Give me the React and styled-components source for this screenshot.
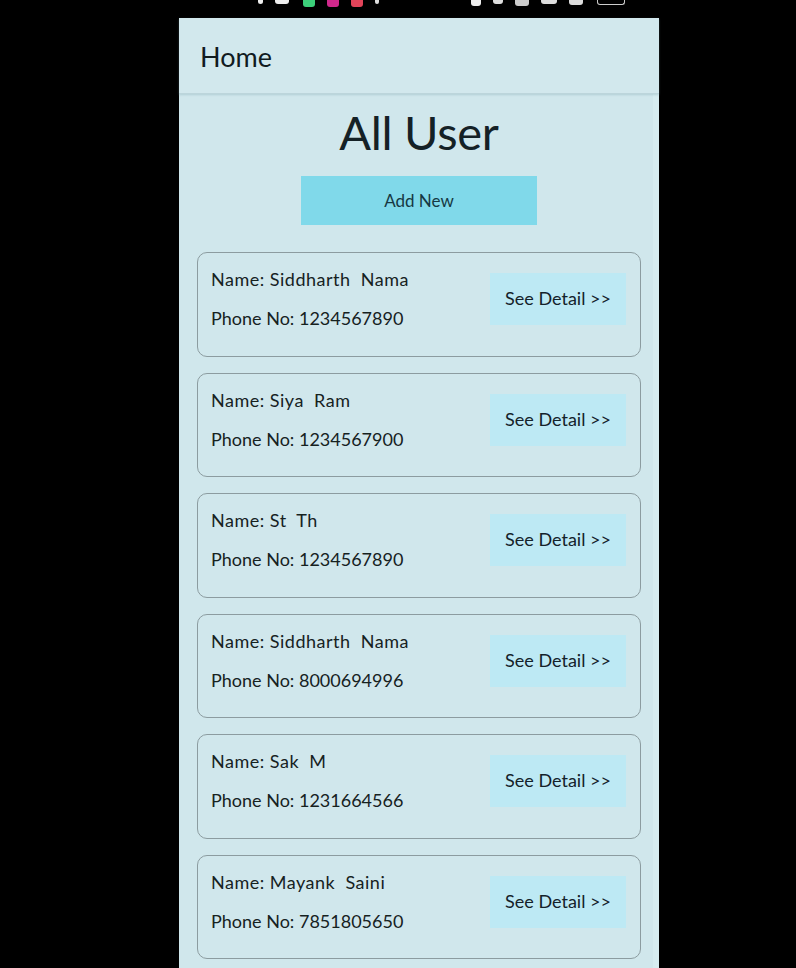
import React from "react";
import styled, { createGlobalStyle } from "styled-components";

const Global = createGlobalStyle`
  html, body { margin: 0; padding: 0; background: #000; }
  body { font-family: "Lato", "Noto Sans", sans-serif; }
`;

const Page = styled.div`
  width: 796px;
  height: 968px;
  overflow: hidden;
  background: #000;
  display: flex;
  flex-direction: column;
`;

const StatusBar = styled.div`
  height: 18px;
  display: flex;
  align-items: flex-start;
  padding-left: 258px;
  gap: 12px;
`;

const StatusDot = styled.span`
  display: block;
  width: ${(p) => p.$w || 12}px;
  height: ${(p) => p.$h || 7}px;
  margin-left: ${(p) => p.$ml || 0}px;
  background: ${(p) => p.$c};
  border-radius: 0 0 3px 3px;
  border: ${(p) => (p.$outline ? "1px solid #ccc" : "none")};
  border-top: none;
  box-sizing: border-box;
`;

const Phone = styled.div`
  margin-left: 179px;
  width: 480px;
  flex: 1;
  background: #d0e7ec;
  display: flex;
  flex-direction: column;
  box-shadow: inset -6px 0 0 #d6ecf0;
`;

const Header = styled.header`
  height: 75px;
  display: flex;
  align-items: center;
  padding-left: 21px;
  background: #d2e8ed;
  border-bottom: 1px solid #bcd5db;
  box-shadow: 0 1px 2px rgba(120, 160, 170, 0.35);
`;

const HeaderTitle = styled.h1`
  margin: 0;
  font-size: 27px;
  font-weight: 400;
  color: #111b1f;
  padding-top: 2px;
`;

const Content = styled.main`
  display: flex;
  flex-direction: column;
  align-items: center;
  padding: 0 18px;
`;

const Title = styled.h2`
  margin: 8px 0 0;
  font-size: 47px;
  font-weight: 400;
  line-height: 60px;
  color: #142126;
  letter-spacing: -0.3px;
`;

const AddButton = styled.button`
  margin-top: 14px;
  width: 236px;
  height: 49px;
  border: none;
  background: #80d9ea;
  font-family: inherit;
  font-size: 17px;
  color: #163843;
  cursor: pointer;
`;

const List = styled.div`
  margin-top: 27px;
  width: 100%;
  display: flex;
  flex-direction: column;
  gap: 16px;
`;

const Card = styled.div`
  box-sizing: border-box;
  height: 104.5px;
  border: 1.5px solid #8c9ca0;
  border-radius: 10px;
  display: flex;
  justify-content: space-between;
  align-items: flex-start;
  padding: 7px 14px 0 13px;
  flex-shrink: 0;
`;

const Info = styled.div`
  display: flex;
  flex-direction: column;
`;

const Line = styled.div`
  font-size: 18px;
  line-height: 39px;
  color: #16221f;
  white-space: pre;
  letter-spacing: ${(p) => (p.$wide ? "0.5px" : "0")};
`;

const DetailButton = styled.button`
  margin-top: 13px;
  width: 136px;
  height: 52px;
  border: none;
  background: #bde9f4;
  font-family: inherit;
  font-size: 18px;
  color: #14222a;
  cursor: pointer;
  padding: 0 0 2px;
`;

const users = [
  { name: "Siddharth  Nama", phone: "1234567890" },
  { name: "Siya  Ram", phone: "1234567900" },
  { name: "St  Th", phone: "1234567890" },
  { name: "Siddharth  Nama", phone: "8000694996" },
  { name: "Sak  M", phone: "1231664566" },
  { name: "Mayank  Saini", phone: "7851805650" },
];

export default function App() {
  return (
    <Page>
      <Global />
      <StatusBar>
        <StatusDot $c="#eee" $w={5} $h={4} />
        <StatusDot $c="#eee" $w={14} $h={4} />
        <StatusDot $c="#3ccf7a" $ml={2} />
        <StatusDot $c="#d0288c" />
        <StatusDot $c="#e2445a" />
        <StatusDot $c="#ddd" $w={4} $h={4} />
        <StatusDot $c="#eee" $w={10} $h={6} $ml={80} />
        <StatusDot $c="#ddd" $w={10} $h={4} />
        <StatusDot $c="#ccc" $w={14} $h={6} />
        <StatusDot $c="#ddd" $w={16} $h={4} />
        <StatusDot $c="#ddd" $w={14} $h={5} />
        <StatusDot $c="transparent" $outline $w={28} $h={5} $ml={2} />
      </StatusBar>
      <Phone>
        <Header>
          <HeaderTitle>Home</HeaderTitle>
        </Header>
        <Content>
          <Title>All User</Title>
          <AddButton>Add New</AddButton>
          <List>
            {users.map((u, i) => (
              <Card key={i}>
                <Info>
                  <Line $wide>Name: {u.name}</Line>
                  <Line>Phone No: {u.phone}</Line>
                </Info>
                <DetailButton>See Detail &gt;&gt;</DetailButton>
              </Card>
            ))}
          </List>
        </Content>
      </Phone>
    </Page>
  );
}
